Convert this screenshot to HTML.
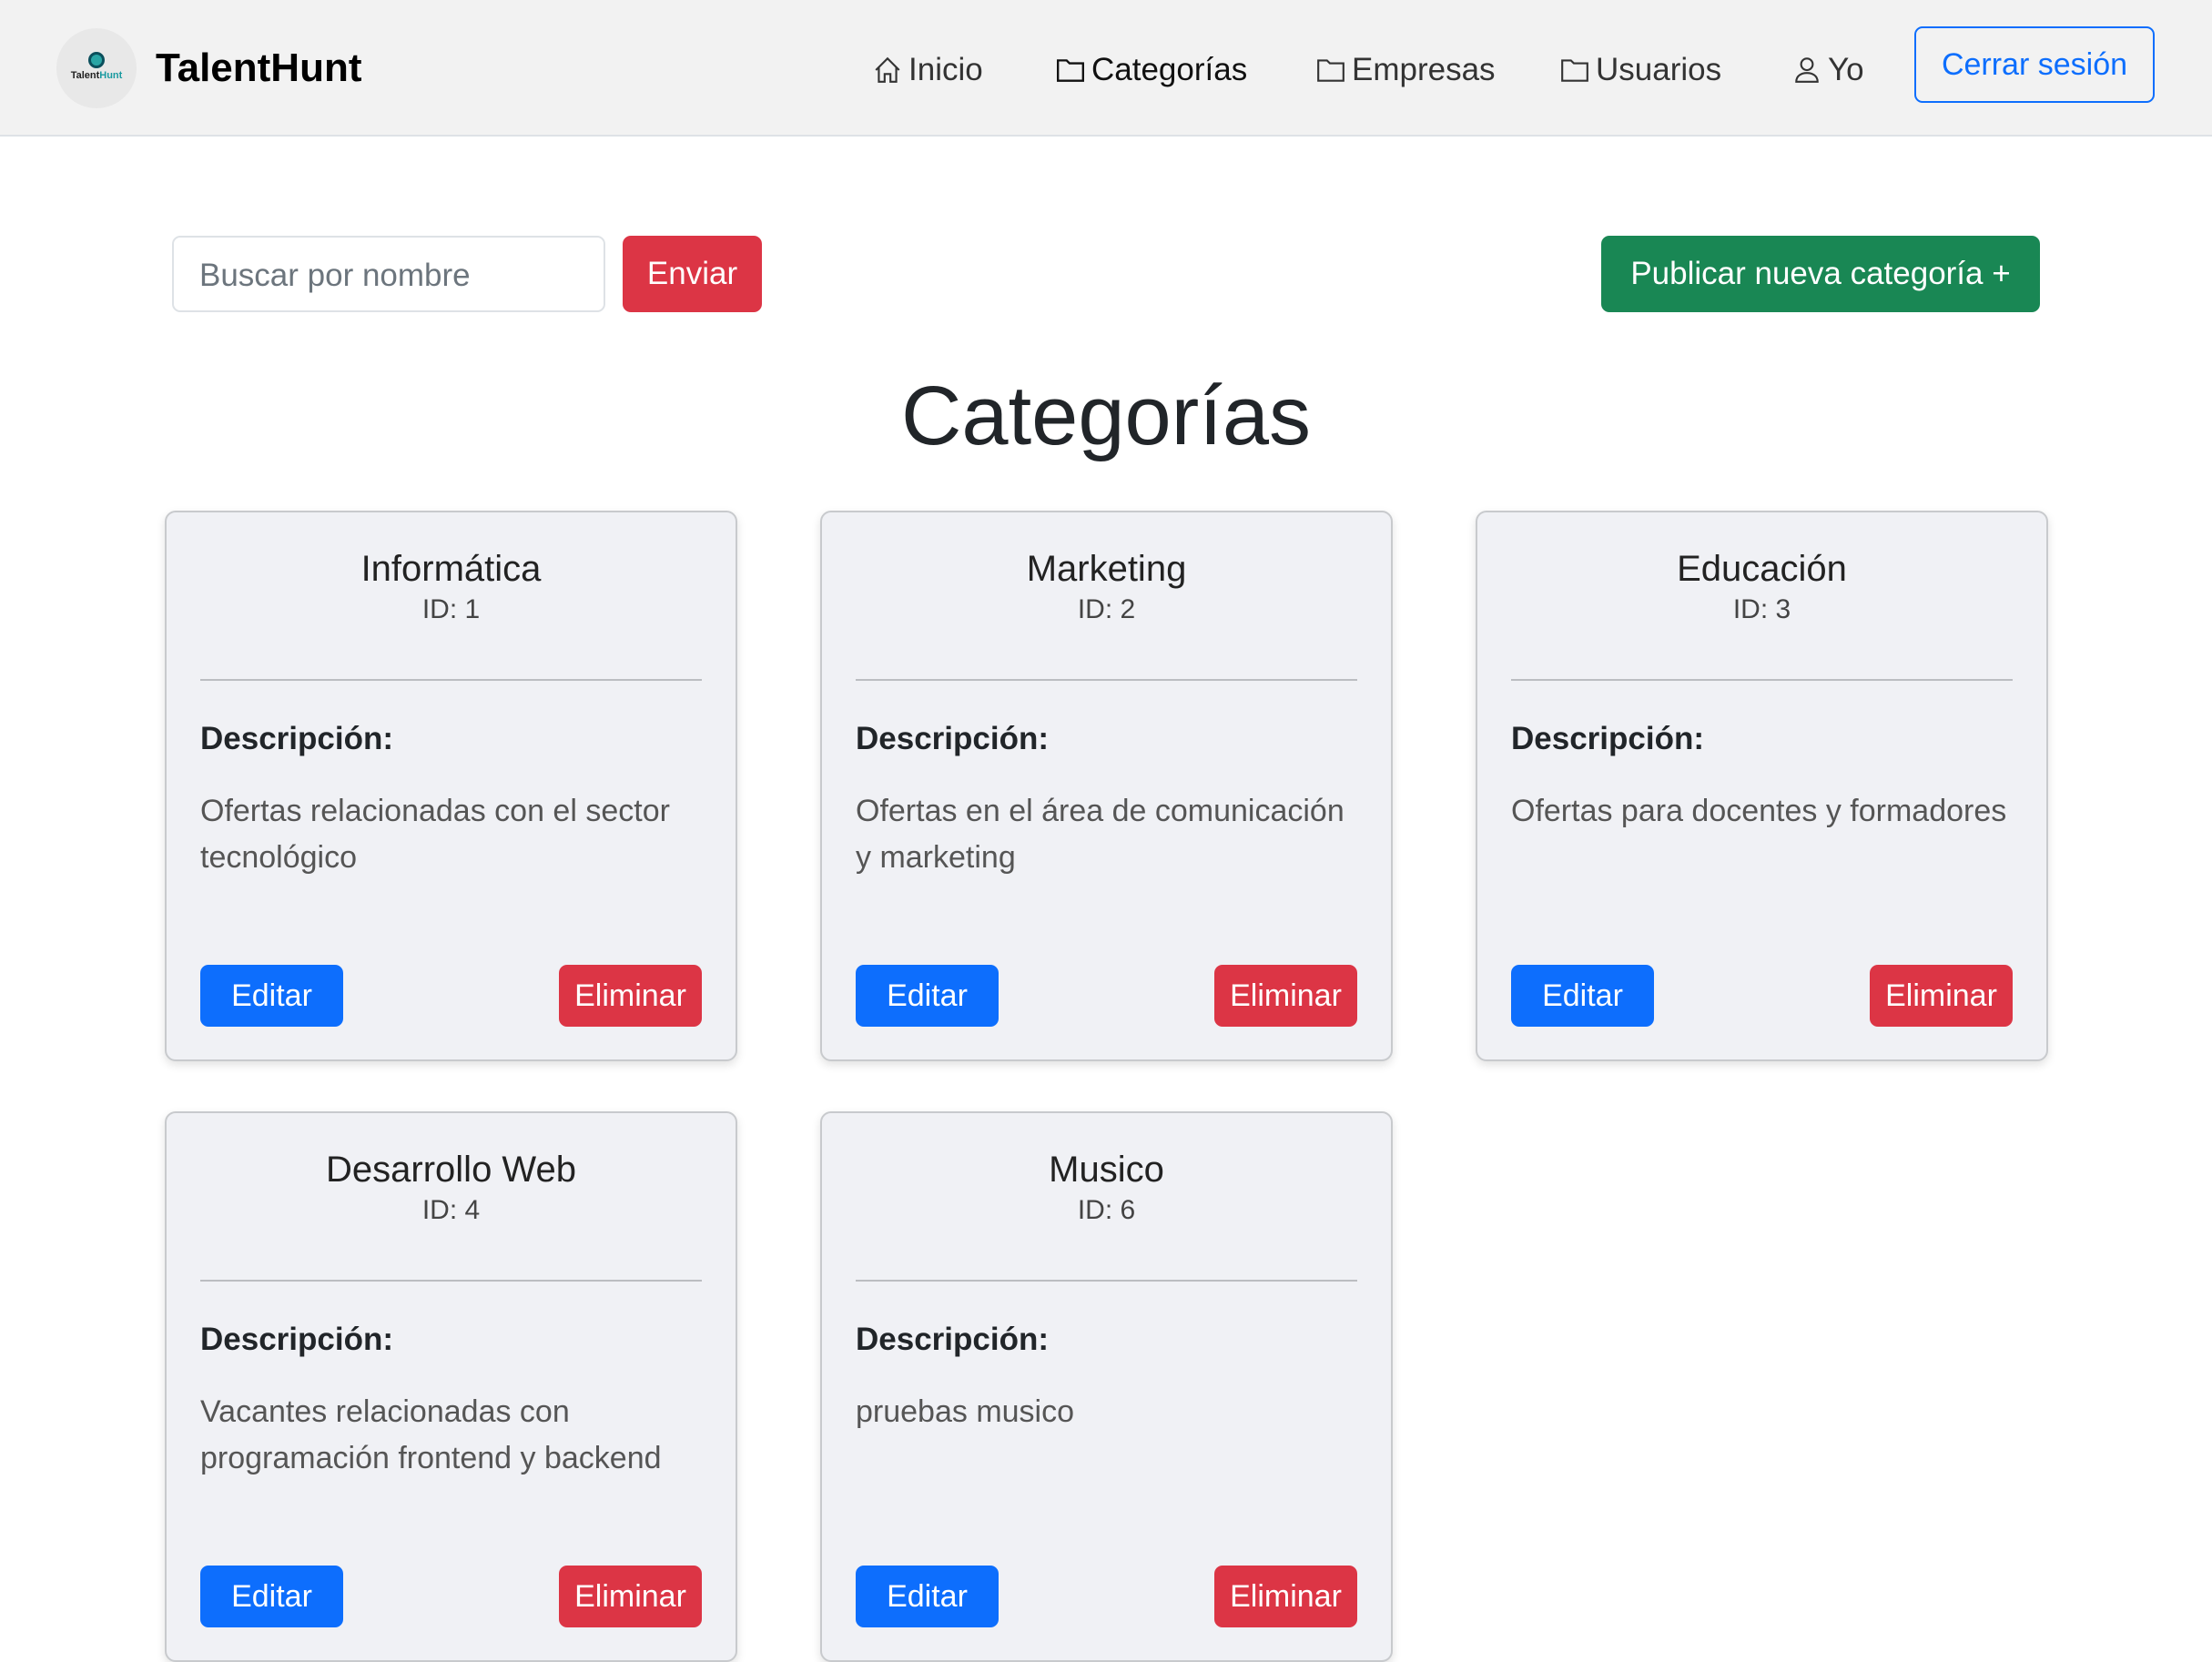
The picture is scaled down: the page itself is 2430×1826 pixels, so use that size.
<!DOCTYPE html>
<html><head><meta charset="utf-8"><style>
*{box-sizing:border-box;margin:0;padding:0}
body{width:2430px;height:1800px;overflow:hidden;background:#fff;font-family:"Liberation Sans",sans-serif;color:#212529;position:relative}
.nav{position:absolute;left:0;top:0;width:2430px;height:150px;background:#f2f2f2;border-bottom:2px solid #dee2e6}
.logo{position:absolute;left:62px;top:31px;width:88px;height:88px;border-radius:50%;background:#e8e8e8;text-align:center;font-size:11px;font-weight:bold;padding-top:26px;color:#222}
.logo i{display:block;width:18px;height:18px;border:3px solid #0b4f5c;border-radius:50%;margin:0 auto 2px;background:#2aa5a5}
.logo b{color:#1a9aa0}
.brand{position:absolute;left:171px;top:50px;font-size:44px;font-weight:bold;color:#000}
.ni{position:absolute;top:57px;font-size:35px;color:#333;display:flex;align-items:center;gap:6px}
.ni svg{width:34px;height:34px}
.out{position:absolute;left:2103px;top:29px;width:264px;height:84px;border:2px solid #0d6efd;border-radius:9px;color:#0d6efd;font-size:34px;display:flex;align-items:center;justify-content:center}
.inp{position:absolute;left:189px;top:259px;width:476px;height:84px;border:2px solid #dee2e6;border-radius:9px;font-size:35px;color:#6c757d;padding:22px 28px}
.btn{position:absolute;color:#fff;font-size:34px;border-radius:9px;display:flex;align-items:center;justify-content:center}
h1{position:absolute;left:0;width:2430px;text-align:center;top:405px;font-size:92px;font-weight:500}
.card{position:absolute;width:629px;height:605px;background:#f0f1f5;border:2px solid #c8cacd;border-radius:12px;box-shadow:0 4px 10px rgba(0,0,0,.12)}
.card .t{position:absolute;left:0;width:100%;text-align:center;top:40px;font-size:40px;font-weight:500;color:#222}
.card .id{position:absolute;left:0;width:100%;text-align:center;top:90px;font-size:30px;color:#444}
.card hr{position:absolute;left:37px;right:37px;top:183px;border:0;border-top:2px solid #bbbdc1}
.card .d{position:absolute;left:37px;top:229px;font-size:35px;font-weight:bold}
.card .p{position:absolute;left:37px;width:560px;top:303px;font-size:34px;line-height:51px;color:#555}
.card .e{left:37px;top:497px;width:157px;height:68px;background:#0d6efd}
.card .x{right:37px;top:497px;width:157px;height:68px;background:#dc3545}
</style></head><body>
<div class="nav">
<div class="logo"><i></i>Talent<b>Hunt</b></div>
<div class="brand">TalentHunt</div>
<div class="ni" style="left:958px"><svg viewBox="0 0 16 16" fill="none" stroke="#333" stroke-width="1"><path d="M2 8L8 2l6 6M3.5 6.5V14h3v-4h3v4h3V6.5"/></svg>Inicio</div>
<div class="ni" style="left:1159px;color:#111"><svg viewBox="0 0 16 16" fill="none" stroke="#111" stroke-width="1.1"><path d="M1.5 3h4.5l1.5 1.5h7v9h-13z"/></svg>Categorías</div>
<div class="ni" style="left:1445px"><svg viewBox="0 0 16 16" fill="none" stroke="#333" stroke-width="1"><path d="M1.5 3h4.5l1.5 1.5h7v9h-13z"/></svg>Empresas</div>
<div class="ni" style="left:1713px"><svg viewBox="0 0 16 16" fill="none" stroke="#333" stroke-width="1"><path d="M1.5 3h4.5l1.5 1.5h7v9h-13z"/></svg>Usuarios</div>
<div class="ni" style="left:1968px"><svg viewBox="0 0 16 16" fill="none" stroke="#333" stroke-width="1"><circle cx="8" cy="5" r="3"/><path d="M2.5 14c0-3 2.5-4.5 5.5-4.5s5.5 1.5 5.5 4.5z"/></svg>Yo</div>
<div class="out">Cerrar sesión</div>
</div>
<div class="inp">Buscar por nombre</div>
<div class="btn" style="left:684px;top:259px;width:153px;height:84px;background:#dc3545;font-size:35px">Enviar</div>
<div class="btn" style="left:1759px;top:259px;width:482px;height:84px;background:#198754;font-size:35px">Publicar nueva categoría +</div>
<h1>Categorías</h1>

<div class="card" style="left:181px;top:561px"><div class="t">Informática</div><div class="id">ID: 1</div><hr><div class="d">Descripción:</div><div class="p">Ofertas relacionadas con el sector tecnológico</div><div class="btn e">Editar</div><div class="btn x">Eliminar</div></div>
<div class="card" style="left:901px;top:561px"><div class="t">Marketing</div><div class="id">ID: 2</div><hr><div class="d">Descripción:</div><div class="p">Ofertas en el área de comunicación y marketing</div><div class="btn e">Editar</div><div class="btn x">Eliminar</div></div>
<div class="card" style="left:1621px;top:561px"><div class="t">Educación</div><div class="id">ID: 3</div><hr><div class="d">Descripción:</div><div class="p">Ofertas para docentes y formadores</div><div class="btn e">Editar</div><div class="btn x">Eliminar</div></div>
<div class="card" style="left:181px;top:1221px"><div class="t">Desarrollo Web</div><div class="id">ID: 4</div><hr><div class="d">Descripción:</div><div class="p">Vacantes relacionadas con programación frontend y backend</div><div class="btn e">Editar</div><div class="btn x">Eliminar</div></div>
<div class="card" style="left:901px;top:1221px"><div class="t">Musico</div><div class="id">ID: 6</div><hr><div class="d">Descripción:</div><div class="p">pruebas musico</div><div class="btn e">Editar</div><div class="btn x">Eliminar</div></div>
</body></html>
